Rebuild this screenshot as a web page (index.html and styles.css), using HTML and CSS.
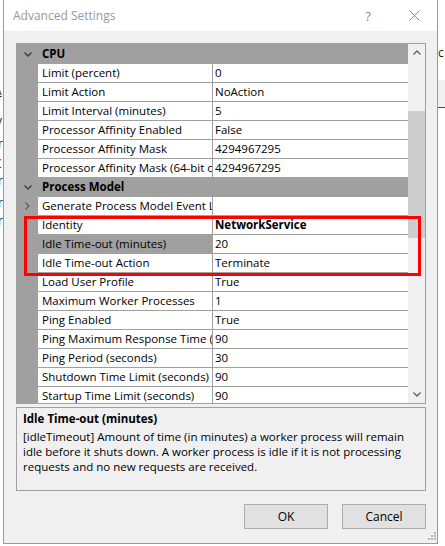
FILE: index.html
```html
<!DOCTYPE html>
<html lang="en">
<head>
    <meta charset="UTF-8">
    <title>Advanced Settings</title>
    <link rel="stylesheet" href="styles.css">
</head>
<body>

<!-- bits of the window behind the dialog -->
<div class="behind">
    <span class="bit" style="left:-3px;top:44px">i</span>
    <span class="bit u" style="left:-6px;top:84px">A</span>
    <span class="bit" style="left:-4px;top:114px">v</span>
    <span class="bit" style="left:-2px;top:137px">r</span>
    <span class="bit" style="left:-6px;top:157px">C</span>
    <span class="bit" style="left:-2px;top:174px">r</span>
    <span class="bit" style="left:-2px;top:196px">r</span>
    <span class="bit" style="left:-2px;top:214px">r</span>
    <span class="bit" style="left:438px;top:46px">c</span>
    <div class="band"></div>
</div>

<div class="dialog">
    <div class="titlebar">
        <span class="title">Advanced Settings</span>
        <span class="caption-btn">?</span>
        <span class="caption-btn">
            <svg width="11" height="11" viewBox="0 0 11 11"><path d="M0.5 0.5L10.5 10.5M10.5 0.5L0.5 10.5" stroke="#8a8a8a" stroke-width="1" fill="none"/></svg>
        </span>
    </div>

    <div class="content">
        <div class="propgrid">
            <div class="rows">
                <div class="cat">
                    <span class="gutter"><svg width="8" height="5" viewBox="0 0 8 5"><path d="M0.5 0.5L4 4L7.5 0.5" stroke="#3a3a3a" stroke-width="1.3" fill="none"/></svg></span>
                    <span class="cat-name">CPU</span>
                </div>
                <div class="prop"><span class="gutter"></span><span class="name">Limit (percent)</span><span class="value">0</span></div>
                <div class="prop"><span class="gutter"></span><span class="name">Limit Action</span><span class="value">NoAction</span></div>
                <div class="prop"><span class="gutter"></span><span class="name">Limit Interval (minutes)</span><span class="value">5</span></div>
                <div class="prop"><span class="gutter"></span><span class="name">Processor Affinity Enabled</span><span class="value">False</span></div>
                <div class="prop"><span class="gutter"></span><span class="name">Processor Affinity Mask</span><span class="value">4294967295</span></div>
                <div class="prop"><span class="gutter"></span><span class="name">Processor Affinity Mask (64-bit option)</span><span class="value">4294967295</span></div>
                <div class="cat">
                    <span class="gutter"><svg width="8" height="5" viewBox="0 0 8 5"><path d="M0.5 0.5L4 4L7.5 0.5" stroke="#3a3a3a" stroke-width="1.3" fill="none"/></svg></span>
                    <span class="cat-name">Process Model</span>
                </div>
                <div class="prop">
                    <span class="gutter"><svg width="5" height="8" viewBox="0 0 5 8"><path d="M0.5 0.5L4 4L0.5 7.5" stroke="#606060" stroke-width="1.3" fill="none"/></svg></span>
                    <span class="name">Generate Process Model Event Log Entry</span><span class="value"></span>
                </div>
                <div class="prop"><span class="gutter"></span><span class="name">Identity</span><span class="value changed">NetworkService</span></div>
                <div class="prop selected"><span class="gutter"></span><span class="name">Idle Time-out (minutes)</span><span class="value">20</span></div>
                <div class="prop"><span class="gutter"></span><span class="name">Idle Time-out Action</span><span class="value">Terminate</span></div>
                <div class="prop"><span class="gutter"></span><span class="name">Load User Profile</span><span class="value">True</span></div>
                <div class="prop"><span class="gutter"></span><span class="name">Maximum Worker Processes</span><span class="value">1</span></div>
                <div class="prop"><span class="gutter"></span><span class="name">Ping Enabled</span><span class="value">True</span></div>
                <div class="prop"><span class="gutter"></span><span class="name">Ping Maximum Response Time (seconds)</span><span class="value">90</span></div>
                <div class="prop"><span class="gutter"></span><span class="name">Ping Period (seconds)</span><span class="value">30</span></div>
                <div class="prop"><span class="gutter"></span><span class="name">Shutdown Time Limit (seconds)</span><span class="value">90</span></div>
                <div class="prop"><span class="gutter"></span><span class="name">Startup Time Limit (seconds)</span><span class="value">90</span></div>
            </div>

            <div class="vscroll">
                <div class="arrow"><svg width="8" height="5" viewBox="0 0 8 5"><path d="M0.5 4.5L4 1L7.5 4.5" stroke="#606060" stroke-width="1.3" fill="none"/></svg></div>
                <div class="track"><div class="thumb"></div></div>
                <div class="arrow"><svg width="8" height="5" viewBox="0 0 8 5"><path d="M0.5 0.5L4 4L7.5 0.5" stroke="#606060" stroke-width="1.3" fill="none"/></svg></div>
            </div>

            <!-- red box drawn round the identity / idle rows -->
            <div class="callout"></div>
        </div>

        <div class="help-pane">
            <div class="help-title">Idle Time-out (minutes)</div>
            <p>[idleTimeout] Amount of time (in minutes) a worker process will remain idle before it shuts down. A worker process is idle if it is not processing requests and no new requests are received.</p>
        </div>

        <div class="buttons">
            <button>OK</button>
            <button>Cancel</button>
        </div>
    </div>

    <svg class="grip" width="8" height="8" viewBox="0 0 8 8">
        <rect x="6" y="0" width="2" height="2" fill="#b4b4b4"/>
        <rect x="3" y="3" width="2" height="2" fill="#b4b4b4"/>
        <rect x="6" y="3" width="2" height="2" fill="#b4b4b4"/>
        <rect x="0" y="6" width="2" height="2" fill="#b4b4b4"/>
        <rect x="3" y="6" width="2" height="2" fill="#b4b4b4"/>
        <rect x="6" y="6" width="2" height="2" fill="#b4b4b4"/>
    </svg>
</div>

</body>
</html>
```

FILE: styles.css
```css
body {
    margin: 0;
    width: 445px;
    height: 546px;
    overflow: hidden;
    position: relative;
    background: #fff;
    font-family: "Segoe UI", "Open Sans", "Noto Sans", sans-serif;
    font-size: 11.5px;
    color: #000;
}

/* window in the background */
.behind .bit {
    position: absolute;
    font-size: 12px;
    line-height: 14px;
    color: #1a1a1a;
}
.behind .u {
    text-decoration: underline;
}
.behind .band {
    position: absolute;
    left: 438px;
    top: 80px;
    width: 7px;
    height: 27px;
    background: #f0f0f0;
    border-bottom: 1px solid #3c4a6a;
}

.dialog {
    position: relative;
    margin-left: 3px;
    width: 435px;
    height: 544px;
    box-sizing: border-box;
    border: 1px solid #9c9c9c;
    border-top: none;
    background: #f0f0f0;
}

.titlebar {
    height: 31px;
    background: #fff;
    display: flex;
    align-items: center;
    padding-left: 9px;
}
.title {
    flex: 1;
    font-size: 12px;
    color: #999;
    margin-top: -1px;
}
.caption-btn {
    width: 46px;
    height: 31px;
    display: flex;
    align-items: center;
    justify-content: center;
    color: #8a8a8a;
    font-size: 13px;
}

.content {
    padding: 12px 11px 0 12px;
}

/* property grid */
.propgrid {
    position: relative;
    display: flex;
    height: 361px;
    box-sizing: border-box;
    border: 1px solid #a0a0a0;
}
.rows {
    flex: 1;
    overflow: hidden;
    background: #a0a0a0;
}
.cat, .prop {
    display: flex;
    height: 19px;
    line-height: 18px;
}
.gutter {
    width: 21px;
    flex: none;
    display: flex;
    align-items: center;
    justify-content: center;
    padding-top: 1px;
}
.cat-name {
    padding: 1px 0 0 4px;
    font-weight: bold;
}
.prop .name,
.prop .value {
    margin-top: 1px;
    height: 18px;
    background: #fff;
    white-space: nowrap;
    overflow: hidden;
}
.prop .name {
    width: 170px;
    flex: none;
    padding-left: 4px;
    margin-right: 1px;
}
.prop .value {
    flex: 1;
    padding-left: 2px;
}
.prop .changed {
    font-weight: bold;
}
.prop.selected .name {
    background: #a0a0a0;
}

.vscroll {
    width: 17px;
    display: flex;
    flex-direction: column;
    background: #f0f0f0;
}
.vscroll .arrow {
    height: 17px;
    display: flex;
    align-items: center;
    justify-content: center;
}
.vscroll .track {
    flex: 1;
}
.vscroll .thumb {
    margin-top: 50px;
    height: 127px;
    background: #cdcdcd;
}

.callout {
    position: absolute;
    left: 7px;
    top: 172px;
    width: 397px;
    height: 60px;
    box-sizing: border-box;
    border: 3px solid #ff0000;
}

/* description under the grid */
.help-pane {
    margin-top: 3px;
    height: 84px;
    box-sizing: border-box;
    border: 1px solid #a0a0a0;
    padding: 3px 6px 0 6px;
    line-height: 15px;
}
.help-title {
    font-weight: bold;
}
.help-pane p {
    margin: 3px 0 0 0;
}

.buttons {
    display: flex;
    justify-content: flex-end;
    gap: 14px;
    margin-top: 13px;
}
button {
    width: 84px;
    height: 25px;
    background: #e1e1e1;
    border: 1px solid #adadad;
    font-family: inherit;
    font-size: 12px;
    color: #000;
    padding: 0;
}

.grip {
    position: absolute;
    right: 1px;
    bottom: 3px;
}
```
